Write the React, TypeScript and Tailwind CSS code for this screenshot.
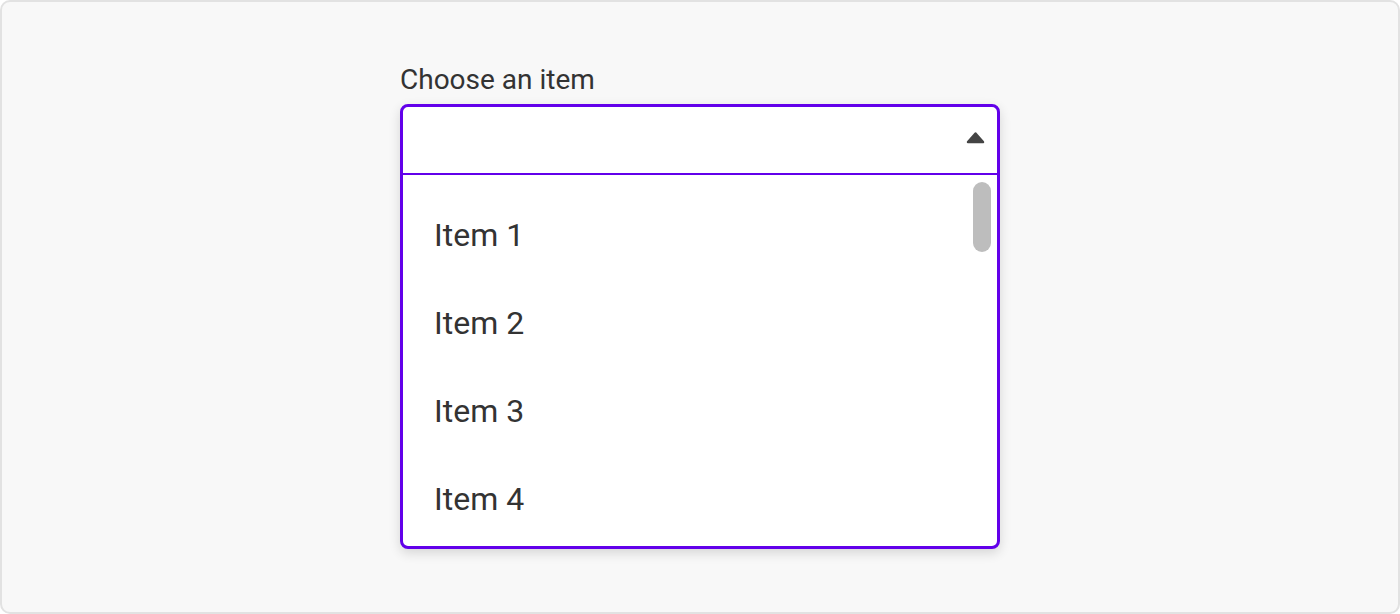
import { useState } from 'react'

const items = ['Item 1', 'Item 2', 'Item 3', 'Item 4']

export default function App() {
  const [open, setOpen] = useState(true)
  const [selected, setSelected] = useState<string | null>(null)

  return (
    <div className="w-[1400px] h-[614px] bg-white" style={{ fontFamily: 'Roboto, "Noto Sans", sans-serif' }}>
      <div className="h-full w-full border-2 border-[#e2e2e2] rounded-[10px] bg-[#f8f8f8] flex justify-center pt-[62px]">
        <div className="w-[600px] flex flex-col">
          {/* Label */}
          <label className="block text-[28px] leading-[32px] text-[#333333] mb-[8px]">
            Choose an item
          </label>

          {/* Select box */}
          <div className="border-[3px] border-[#6200ea] rounded-[8px] bg-white shadow-[0_4px_12px_rgba(0,0,0,0.14)] overflow-hidden">
            <button
              onClick={() => setOpen(!open)}
              className="w-full h-[66px] flex items-center justify-between pl-[31px] pr-[12px] text-[32px] text-[#333333]"
            >
              <span>{selected ?? ''}</span>
              <svg width="19" height="14" viewBox="0 0 19 14" className="mb-[6px]">
                <polygon
                  points="2,12 9.5,3.5 17,12"
                  fill="#444444"
                  stroke="#444444"
                  strokeWidth="2.5"
                  strokeLinejoin="round"
                />
              </svg>
            </button>

            {open && (
              <div className="relative border-t-2 border-[#6200ea] h-[373px] overflow-hidden">
                <ul className="pt-[16px]">
                  {items.map((item) => (
                    <li
                      key={item}
                      onClick={() => setSelected(item)}
                      className="h-[88px] flex items-center pl-[31px] text-[32px] text-[#333333] cursor-pointer hover:bg-gray-50"
                    >
                      {item}
                    </li>
                  ))}
                </ul>
                {/* Scrollbar thumb */}
                <div className="absolute top-[7px] right-[6px] w-[18px] h-[70px] rounded-full bg-[#bdbdbd]" />
              </div>
            )}
          </div>
        </div>
      </div>
    </div>
  )
}
